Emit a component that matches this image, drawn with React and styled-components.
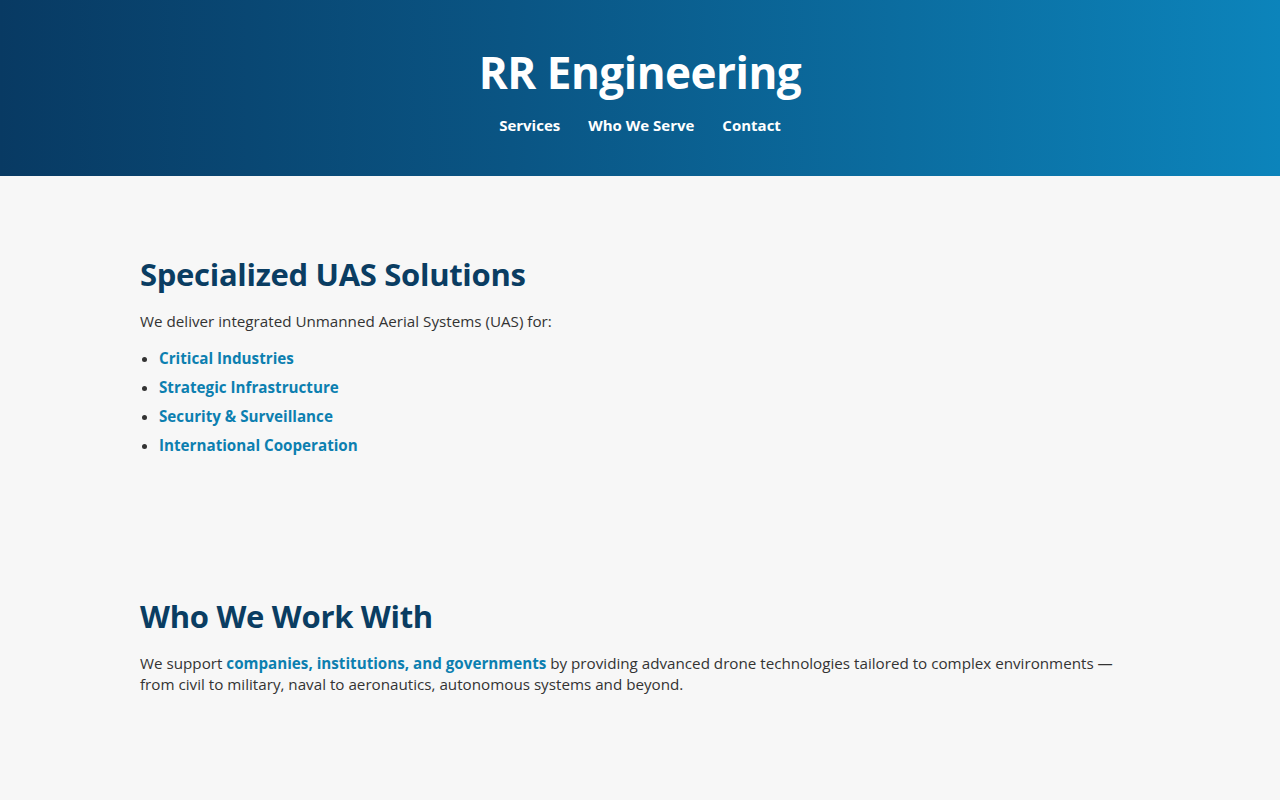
import styled, { createGlobalStyle } from 'styled-components';

const GlobalStyle = createGlobalStyle`
	* {
		box-sizing: border-box;
	}
	body {
		margin: 0;
		background: #f7f7f7;
		font-family: 'Open Sans', 'Noto Sans', sans-serif;
		color: #333;
	}
`;

const HeaderWrap = styled.header`
	height: 176px;
	background: linear-gradient(90deg, #083a63 0%, #0a5584 40%, #0c84bb 100%);
	color: #fff;
	display: flex;
	flex-direction: column;
	align-items: center;
	padding-top: 43px;
`;

const Logo = styled.h1`
	margin: 0;
	font-size: 44px;
	line-height: 58px;
	font-weight: 700;
	letter-spacing: -0.5px;
`;

const Gnb = styled.ul`
	display: flex;
	gap: 28px;
	list-style: none;
	margin: 13px 0 0;
	padding: 0;
	a {
		font-size: 15px;
		font-weight: 700;
		color: #fff;
		text-decoration: none;
	}
`;

const Main = styled.main`
	max-width: 1000px;
	margin: 0 auto;
	padding: 56px 0;
`;

const Section = styled.section`
	padding: 20px 0 ${(props) => props.$bottom || '0'};
`;

const Title = styled.h2`
	margin: 0 0 15px;
	font-size: 31px;
	line-height: 44px;
	font-weight: 700;
	color: #0a3d62;
	letter-spacing: -0.3px;
`;

const Text = styled.p`
	margin: 0;
	font-size: 15.2px;
	line-height: 21px;
`;

const List = styled.ul`
	margin: 12px 0 0;
	padding-left: 19px;
	li {
		font-size: 15.2px;
		line-height: 29px;
	}
`;

const Highlight = styled.strong`
	color: #0c7fb0;
	font-weight: 700;
`;

const items = ['Critical Industries', 'Strategic Infrastructure', 'Security & Surveillance', 'International Cooperation'];

function App() {
	return (
		<>
			<GlobalStyle />
			<HeaderWrap>
				<Logo>RR Engineering</Logo>
				<nav>
					<Gnb>
						<li><a href='#services'>Services</a></li>
						<li><a href='#who'>Who We Serve</a></li>
						<li><a href='#contact'>Contact</a></li>
					</Gnb>
				</nav>
			</HeaderWrap>
			<Main>
				<Section id='services' $bottom='114px'>
					<Title>Specialized UAS Solutions</Title>
					<Text>We deliver integrated Unmanned Aerial Systems (UAS) for:</Text>
					<List>
						{items.map((item) => (
							<li key={item}>
								<Highlight>{item}</Highlight>
							</li>
						))}
					</List>
				</Section>
				<Section id='who'>
					<Title>Who We Work With</Title>
					<Text>
						We support <Highlight>companies, institutions, and governments</Highlight> by providing advanced drone
						technologies tailored to complex environments — from civil to military, naval to aeronautics, autonomous
						systems and beyond.
					</Text>
				</Section>
			</Main>
		</>
	);
}

export default App;
